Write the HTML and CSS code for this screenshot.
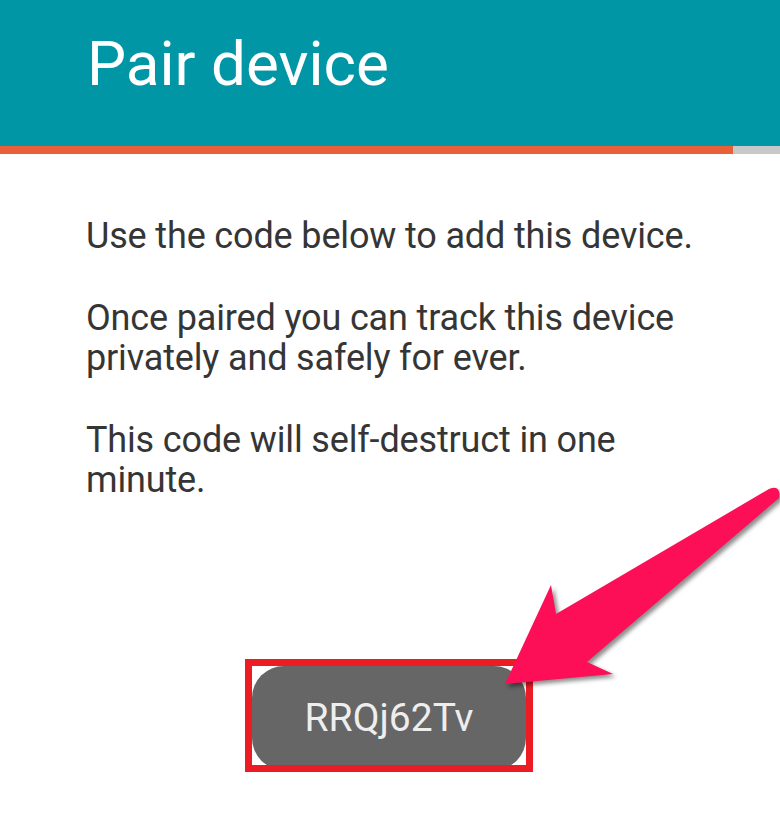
FILE: index.html
```html
<!DOCTYPE html>
<html lang="en">
<head>
<meta charset="utf-8">
<title>Pair device</title>
<link rel="stylesheet" href="styles.css">
</head>
<body>
<header class="appbar">
  <h1 class="title">Pair device</h1>
</header>
<div class="progress"><div class="progress-fill"></div></div>
<main class="content">
  <p class="text">Use the code below to add this device.</p>
  <p class="text">Once paired you can track this device privately and safely for ever.</p>
  <p class="text">This code will self-destruct in one minute.</p>
  <div class="code-wrap">
    <div class="highlight">
      <div class="code-pill">RRQj62Tv</div>
    </div>
  </div>
</main>
<svg class="arrow" viewBox="0 0 780 825" width="780" height="825" aria-hidden="true">
  <path d="M505,684 L551,585 L556,614 L769,489 Q781,484 779,498 L587,662 L613,674 Z" fill="#fd0f58"/>
</svg>
</body>
</html>
```
FILE: styles.css
```css
html, body {
  margin: 0;
  padding: 0;
}
body {
  width: 780px;
  height: 825px;
  overflow: hidden;
  background: #ffffff;
  font-family: Roboto, "Liberation Sans", sans-serif;
  position: relative;
}
.appbar {
  background: #0096a6;
  height: 146px;
  box-sizing: border-box;
  padding: 33px 0 0 87px;
}
.title {
  margin: 0;
  font-size: 62px;
  line-height: 62px;
  font-weight: 400;
  color: #ffffff;
}
.progress {
  height: 8px;
  background: #c8c8c8;
}
.progress-fill {
  width: 733px;
  height: 100%;
  background: #e95f38;
}
.content {
  padding: 62px 40px 0 86px;
}
.text {
  margin: 0 0 42px;
  font-size: 36px;
  line-height: 40px;
  letter-spacing: -0.15px;
  color: #353535;
  max-width: 625px;
}
.code-wrap {
  display: flex;
  justify-content: center;
  margin-top: 159px;
  width: 606px;
}
.highlight {
  width: 288px;
  height: 113px;
  box-sizing: border-box;
  border: 7px solid #ec1c24;
  overflow: hidden;
  background: #ffffff;
}
.code-pill {
  height: 104px;
  border-radius: 32px;
  background: #666666;
  color: #eeeeee;
  font-size: 39px;
  line-height: 104px;
  text-align: center;
}
.arrow {
  position: absolute;
  left: 0;
  top: 0;
  filter: drop-shadow(3px 3px 2px rgba(0, 0, 0, 0.45));
}
```
